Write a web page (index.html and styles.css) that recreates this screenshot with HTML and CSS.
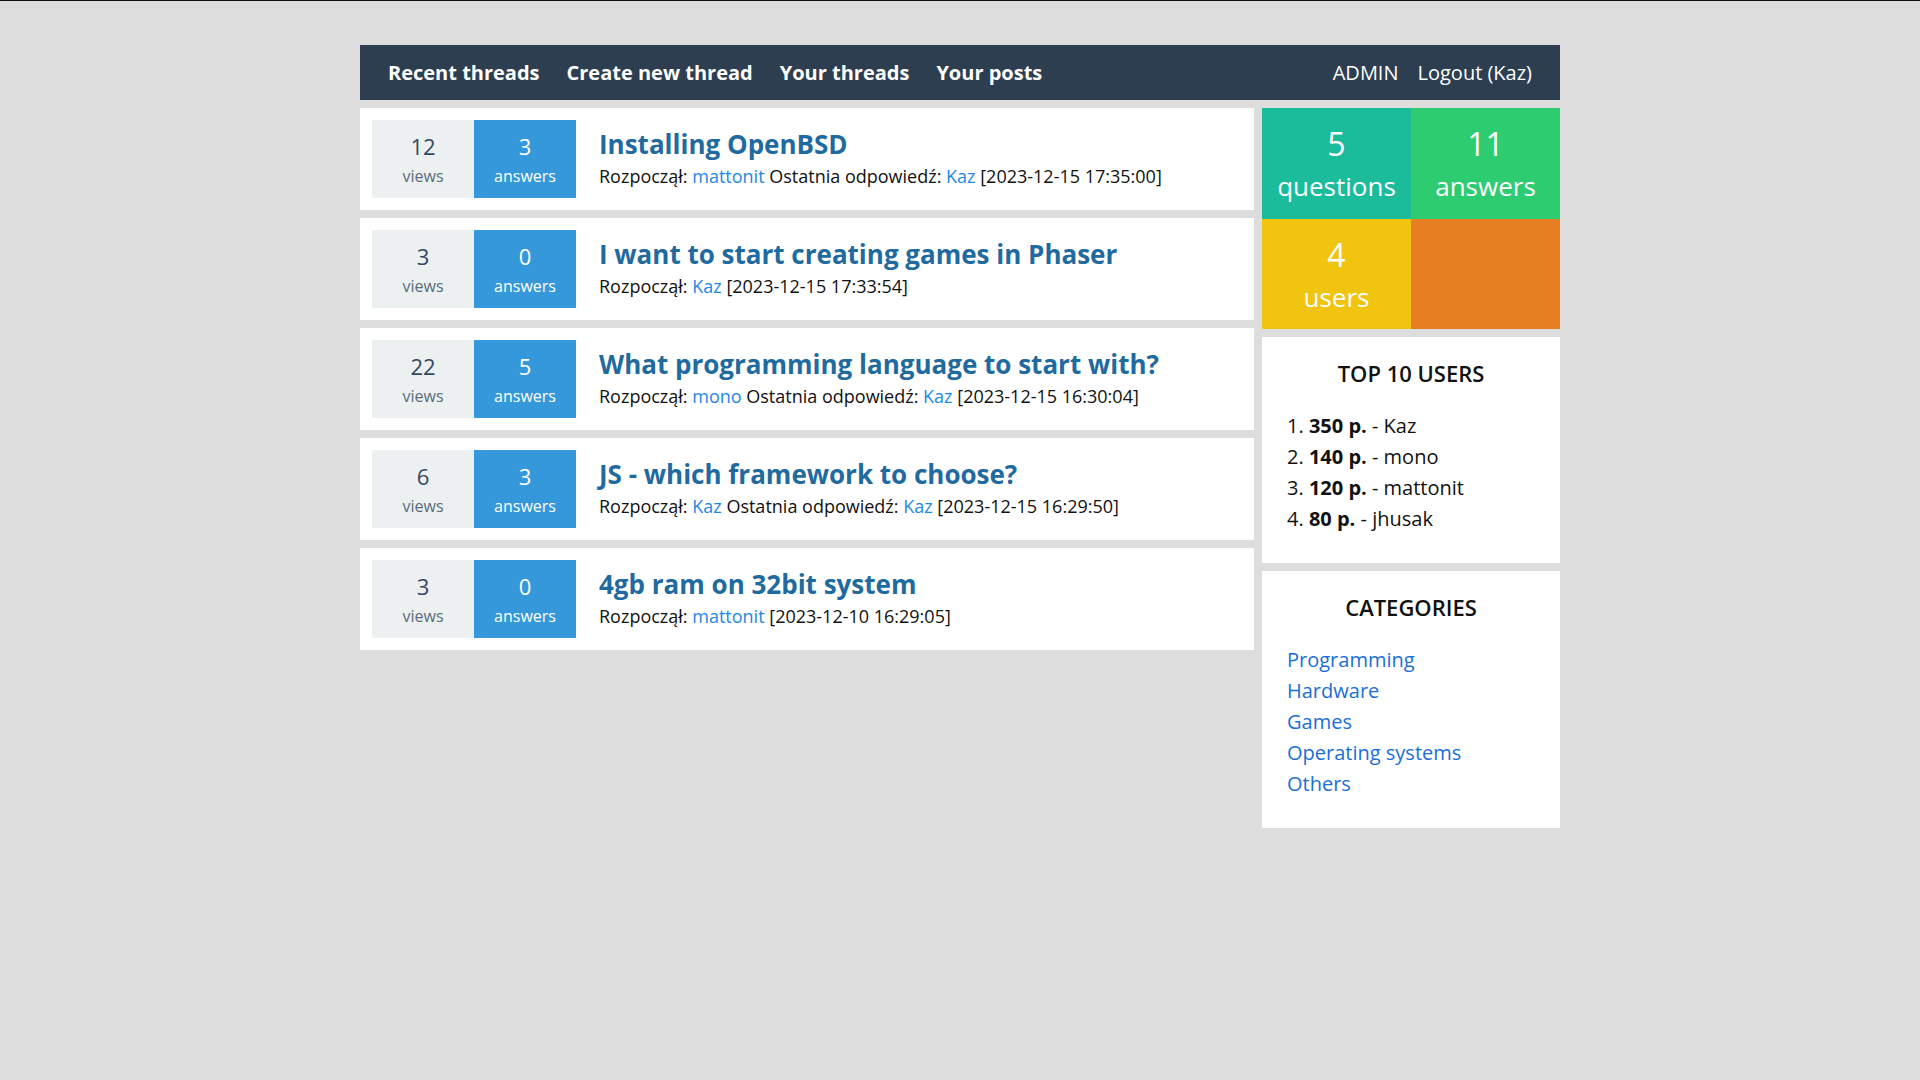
FILE: index.html
```html
<!DOCTYPE html>
<html lang="pl">
<head>
<meta charset="utf-8">
<title>Forum</title>
<link rel="stylesheet" href="styles.css">
</head>
<body>
<div class="page">
  <nav class="topnav">
    <ul class="nav-left">
      <li><a href="#">Recent threads</a></li>
      <li><a href="#">Create new thread</a></li>
      <li><a href="#">Your threads</a></li>
      <li><a href="#">Your posts</a></li>
    </ul>
    <ul class="nav-right">
      <li><a href="#">ADMIN</a></li>
      <li><a href="#">Logout (Kaz)</a></li>
    </ul>
  </nav>
  <div class="layout">
    <main class="threads">
      <article class="thread">
        <div class="counter views"><span class="num">12</span><span class="lbl">views</span></div>
        <div class="counter answers"><span class="num">3</span><span class="lbl">answers</span></div>
        <div class="thread-body">
          <a class="thread-title" href="#">Installing OpenBSD</a>
          <div class="meta">Rozpoczął: <a href="#">mattonit</a> Ostatnia odpowiedź: <a href="#">Kaz</a> [2023-12-15 17:35:00]</div>
        </div>
      </article>
      <article class="thread">
        <div class="counter views"><span class="num">3</span><span class="lbl">views</span></div>
        <div class="counter answers"><span class="num">0</span><span class="lbl">answers</span></div>
        <div class="thread-body">
          <a class="thread-title" href="#">I want to start creating games in Phaser</a>
          <div class="meta">Rozpoczął: <a href="#">Kaz</a> [2023-12-15 17:33:54]</div>
        </div>
      </article>
      <article class="thread">
        <div class="counter views"><span class="num">22</span><span class="lbl">views</span></div>
        <div class="counter answers"><span class="num">5</span><span class="lbl">answers</span></div>
        <div class="thread-body">
          <a class="thread-title" href="#">What programming language to start with?</a>
          <div class="meta">Rozpoczął: <a href="#">mono</a> Ostatnia odpowiedź: <a href="#">Kaz</a> [2023-12-15 16:30:04]</div>
        </div>
      </article>
      <article class="thread">
        <div class="counter views"><span class="num">6</span><span class="lbl">views</span></div>
        <div class="counter answers"><span class="num">3</span><span class="lbl">answers</span></div>
        <div class="thread-body">
          <a class="thread-title" href="#">JS - which framework to choose?</a>
          <div class="meta">Rozpoczął: <a href="#">Kaz</a> Ostatnia odpowiedź: <a href="#">Kaz</a> [2023-12-15 16:29:50]</div>
        </div>
      </article>
      <article class="thread">
        <div class="counter views"><span class="num">3</span><span class="lbl">views</span></div>
        <div class="counter answers"><span class="num">0</span><span class="lbl">answers</span></div>
        <div class="thread-body">
          <a class="thread-title" href="#">4gb ram on 32bit system</a>
          <div class="meta">Rozpoczął: <a href="#">mattonit</a> [2023-12-10 16:29:05]</div>
        </div>
      </article>
    </main>
    <aside class="sidebar">
      <div class="stats">
        <div class="stat teal"><span class="stat-num">5</span><span class="stat-lbl">questions</span></div>
        <div class="stat green"><span class="stat-num">11</span><span class="stat-lbl">answers</span></div>
        <div class="stat yellow"><span class="stat-num">4</span><span class="stat-lbl">users</span></div>
        <div class="stat orange"></div>
      </div>
      <section class="panel">
        <h3 class="panel-title">TOP 10 USERS</h3>
        <ol class="top-users">
          <li><b>350 p.</b> - Kaz</li>
          <li><b>140 p.</b> - mono</li>
          <li><b>120 p.</b> - mattonit</li>
          <li><b>80 p.</b> - jhusak</li>
        </ol>
      </section>
      <section class="panel">
        <h3 class="panel-title">CATEGORIES</h3>
        <ul class="categories">
          <li><a href="#">Programming</a></li>
          <li><a href="#">Hardware</a></li>
          <li><a href="#">Games</a></li>
          <li><a href="#">Operating systems</a></li>
          <li><a href="#">Others</a></li>
        </ul>
      </section>
    </aside>
  </div>
</div>
</body>
</html>
```
FILE: styles.css
```css
* { box-sizing: border-box; }
html, body { margin: 0; padding: 0; }
body {
  background: #dddddd;
  border-top: 1px solid #111;
  font-family: "Open Sans", "Noto Sans", sans-serif;
  color: #111;
  min-height: 1080px;
}
a { text-decoration: none; }
ul, ol { margin: 0; padding: 0; }

.page {
  width: 1200px;
  margin: 44px auto 0;
}

.topnav {
  height: 55px;
  background: #2c3e50;
  display: flex;
  align-items: center;
  justify-content: space-between;
  padding: 0 28px;
  margin-bottom: 8px;
}
.topnav ul { list-style: none; display: flex; }
.nav-left { gap: 27px; }
.nav-left a { color: #fff; font-weight: 700; font-size: 20px; }
.nav-right { gap: 19px; }
.nav-right a { color: #fff; font-weight: 400; font-size: 20px; }

.layout {
  display: flex;
  gap: 8px;
  align-items: flex-start;
}
.threads {
  width: 894px;
  display: flex;
  flex-direction: column;
  gap: 8px;
}
.thread {
  background: #fff;
  padding: 12px;
  display: flex;
  height: 102px;
}
.counter {
  width: 102px;
  height: 78px;
  display: flex;
  flex-direction: column;
  align-items: center;
  padding-top: 10px;
}
.counter .num { font-size: 22px; line-height: 33px; }
.counter .lbl { font-size: 16px; line-height: 27px; }
.views { background: #ecf0f1; color: #34495e; }
.views .lbl { color: #5b6b7b; }
.answers { background: #3498db; color: #fff; }

.thread-body {
  margin-left: 23px;
  padding-top: 8px;
  display: flex;
  flex-direction: column;
  gap: 3px;
}
.thread-title {
  font-size: 26px;
  line-height: 33px;
  font-weight: 700;
  color: #1f6a9f;
}
.meta { font-size: 18px; line-height: 24px; color: #111; }
.meta a { color: #1e88e5; }

.sidebar {
  width: 298px;
  display: flex;
  flex-direction: column;
  gap: 8px;
}
.stats {
  display: grid;
  grid-template-columns: 149px 149px;
  grid-template-rows: 111px 110px;
}
.stat {
  display: flex;
  flex-direction: column;
  align-items: center;
  padding-top: 12px;
  color: #fff;
}
.stat-num { font-size: 32px; line-height: 48px; }
.stat-lbl { font-size: 26px; line-height: 36px; }
.teal { background: #1abc9c; }
.green { background: #2ecc71; }
.yellow { background: #f1c40f; }
.orange { background: #e67e22; }

.panel {
  background: #fff;
  padding: 21px 25px 29px;
}
.panel-title {
  margin: 0 0 22px;
  text-align: center;
  font-size: 22px;
  line-height: 30px;
  font-weight: 600;
  color: #111;
}
.top-users {
  list-style: decimal inside;
  font-size: 20px;
  line-height: 31px;
}
.top-users b { font-weight: 700; }
.categories {
  list-style: none;
  font-size: 20px;
  line-height: 31px;
}
.categories a { color: #1a6fd6; }
```
